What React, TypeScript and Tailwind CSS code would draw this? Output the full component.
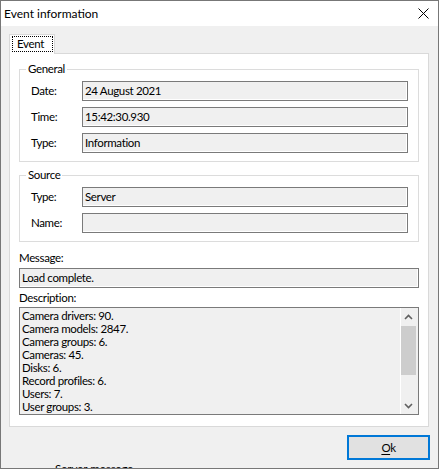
function Field({ value, grow = true }: { value: string; grow?: boolean }) {
  return (
    <div
      className={
        grow
          ? "flex-1 h-[20px] border border-[#7a7a7a] bg-[#f0f0f0] shadow-[inset_-1px_-1px_0_#ffffff] px-[2px] flex items-center leading-[16px] whitespace-nowrap overflow-hidden"
          : "shrink-0 h-[20px] border border-[#7a7a7a] bg-[#f0f0f0] shadow-[inset_-1px_-1px_0_#ffffff] px-[2px] flex items-center leading-[16px] whitespace-nowrap overflow-hidden"
      }
    >
      {value}
    </div>
  );
}

function Row({ label, value }: { label: string; value: string }) {
  return (
    <div className="flex items-center">
      <div className="w-[51px] leading-[16px]">{label}</div>
      <Field value={value} />
    </div>
  );
}

function Group({ title, children }: { title: string; children: React.ReactNode }) {
  return (
    <fieldset className="border border-[#dcdcdc] p-0 m-0 shrink-0">
      <legend className="ml-[6px] px-[2px] leading-[14px] h-[14px]">{title}</legend>
      <div className="flex flex-col gap-[6px] pt-[5px] pb-[8px] pl-[11px] pr-[10px]">{children}</div>
    </fieldset>
  );
}

const lines = [
  "Camera drivers: 90.",
  "Camera models: 2847.",
  "Camera groups: 6.",
  "Cameras: 45.",
  "Disks: 6.",
  "Record profiles: 6.",
  "Users: 7.",
  "User groups: 3.",
];

export default function App() {
  return (
    <div className="w-[439px] h-[469px] border border-[#777777] bg-[#f0f0f0] flex flex-col font-['Lato',sans-serif] text-[11.5px] tracking-[-0.35px] text-black overflow-hidden">
      <div className="h-[25px] bg-white flex items-center justify-between pl-[3px] pr-[9px] shrink-0">
        <span className="text-[12px] tracking-normal">Event information</span>
        <svg width="11" height="11" viewBox="0 0 11 11" className="block">
          <path d="M0.5 0.5 L10.5 10.5 M10.5 0.5 L0.5 10.5" stroke="#000" strokeWidth="1" fill="none" />
        </svg>
      </div>
      <div className="flex-1 flex flex-col pl-[8px] pt-[8px]">
        <div className="flex">
          <div className="relative z-10 -mb-[1px] w-[46px] h-[20px] border border-b-0 border-[#d9d9d9] bg-white pl-[2px] pt-[1px]">
            <div className="w-[41px] h-[16px] border border-dotted border-black pl-[4px] leading-[14px]">Event</div>
          </div>
        </div>
        <div className="w-[420px] h-[374px] border border-[#d9d9d9] bg-white pt-[8px] px-[9px] flex flex-col">
          <Group title="General">
            <Row label="Date:" value="24 August 2021" />
            <Row label="Time:" value="15:42:30.930" />
            <Row label="Type:" value="Information" />
          </Group>
          <div className="h-[6px] shrink-0" />
          <Group title="Source">
            <Row label="Type:" value="Server" />
            <Row label="Name:" value="" />
          </Group>
          <div className="mt-[8px] mb-[2px] leading-[16px] h-[16px] shrink-0">Message:</div>
          <Field value="Load complete." grow={false} />
          <div className="mt-[2px] mb-[1px] leading-[16px] h-[16px] shrink-0">Description:</div>
          <div className="h-[108px] border border-[#7a7a7a] bg-[#f0f0f0] flex overflow-hidden shrink-0">
            <div className="flex-1 pl-[2px] pt-[1px] leading-[13px] overflow-hidden">
              {lines.map((l) => (
                <div key={l} className="whitespace-nowrap">{l}</div>
              ))}
            </div>
            <div className="w-[18px] border-l border-white flex flex-col shrink-0">
              <div className="h-[17px] flex items-center justify-center pr-[2px]">
                <svg width="9" height="6" viewBox="0 0 9 6">
                  <path d="M1 5 L4.5 1.5 L8 5" stroke="#606060" strokeWidth="1.6" fill="none" />
                </svg>
              </div>
              <div className="mt-[1px] h-[49px] w-[15px] bg-[#cdcdcd]" />
              <div className="flex-1" />
              <div className="h-[17px] flex items-center justify-center pr-[2px]">
                <svg width="9" height="6" viewBox="0 0 9 6">
                  <path d="M1 1 L4.5 4.5 L8 1" stroke="#606060" strokeWidth="1.6" fill="none" />
                </svg>
              </div>
            </div>
          </div>
        </div>
        <div className="flex justify-end pr-[8px] mt-[8px]">
          <button className="w-[83px] h-[25px] border-2 border-[#0078d7] bg-[#e1e1e1] flex items-center justify-center leading-[16px] text-black">
            <span><span className="underline underline-offset-2">O</span>k</span>
          </button>
        </div>
        <div className="h-[8px] overflow-hidden pl-[46px]">
          <div className="mt-[1px] leading-[16px] whitespace-nowrap tracking-normal">Server message</div>
        </div>
      </div>
    </div>
  );
}
